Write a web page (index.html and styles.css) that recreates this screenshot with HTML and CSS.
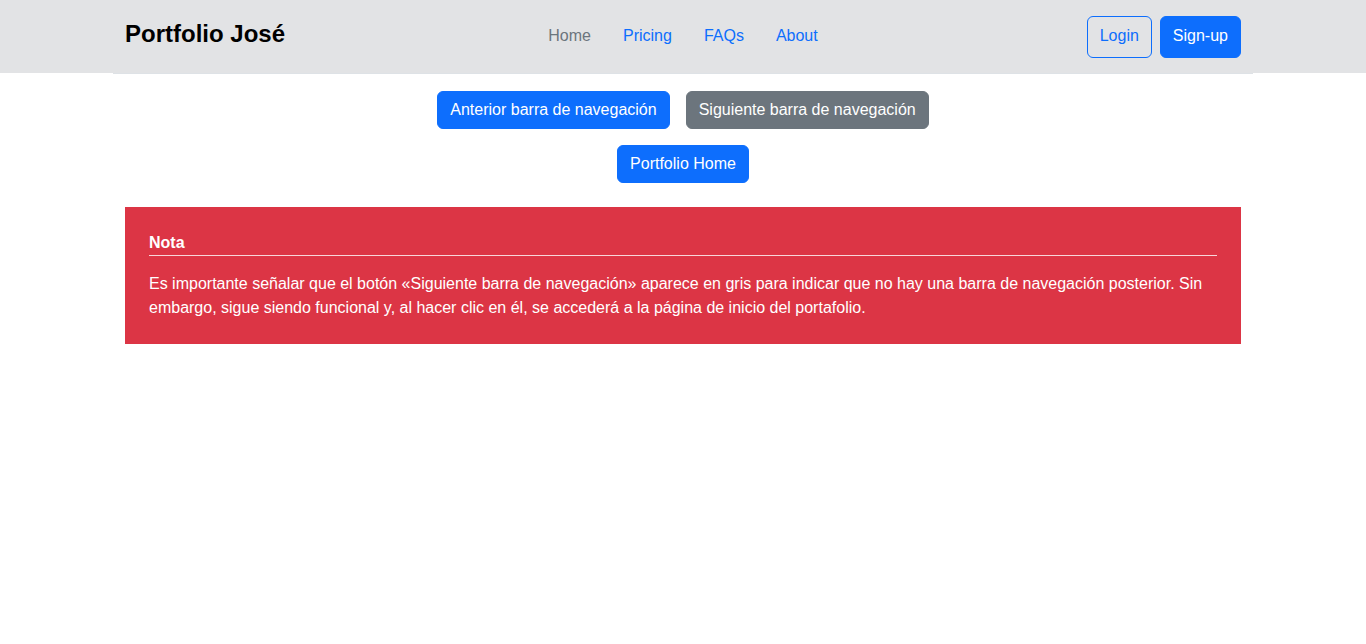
FILE: index.html
```html
<!DOCTYPE html>
<html lang="es">
<head>
<meta charset="utf-8">
<title>Portfolio José</title>
<link rel="stylesheet" href="styles.css">
</head>
<body>
<header class="topbar">
  <div class="container header-inner">
    <a class="brand" href="#">Portfolio José</a>
    <nav class="nav">
      <a class="nav-link muted" href="#">Home</a>
      <a class="nav-link" href="#">Pricing</a>
      <a class="nav-link" href="#">FAQs</a>
      <a class="nav-link" href="#">About</a>
    </nav>
    <div class="actions">
      <button class="btn btn-outline btn-tall">Login</button>
      <button class="btn btn-primary btn-tall">Sign-up</button>
    </div>
  </div>
</header>
<main class="container main">
  <div class="btn-row">
    <button class="btn btn-primary">Anterior barra de navegación</button>
    <button class="btn btn-secondary">Siguiente barra de navegación</button>
  </div>
  <div class="btn-row">
    <button class="btn btn-primary">Portfolio Home</button>
  </div>
  <section class="note">
    <h4 class="note-title">Nota</h4>
    <p class="note-text">Es importante señalar que el botón «Siguiente barra de navegación» aparece en gris para indicar que no hay una barra de navegación posterior. Sin embargo, sigue siendo funcional y, al hacer clic en él, se accederá a la página de inicio del portafolio.</p>
  </section>
</main>
</body>
</html>
```
FILE: styles.css
```css
* { box-sizing: border-box; }
html, body { margin: 0; padding: 0; }
body {
  font-family: "Liberation Sans", Arial, sans-serif;
  font-size: 16px;
  line-height: 24px;
  color: #212529;
  background: #fff;
}
.container {
  width: 1140px;
  margin: 0 auto;
  padding-left: 12px;
  padding-right: 12px;
}
.topbar {
  background: #e2e3e5;
  height: 73px;
}
.header-inner {
  display: grid;
  grid-template-columns: 1fr auto 1fr;
  align-items: start;
  height: 74px;
  padding-top: 16px;
  padding-bottom: 15px;
  border-bottom: 1px solid #dee2e6;
  background: #e2e3e5;
}
.brand {
  font-size: 24px;
  font-weight: 700;
  line-height: 36px;
  color: #000;
  text-decoration: none;
  justify-self: start;
}
.nav {
  display: flex;
}
.nav-link {
  padding: 8px 16px;
  color: #0d6efd;
  text-decoration: none;
  line-height: 24px;
}
.nav-link.muted { color: #6c757d; }
.actions {
  justify-self: end;
  display: flex;
  gap: 8px;
}
.btn {
  font-family: "Liberation Sans", Arial, sans-serif;
  font-size: 16px;
  line-height: 24px;
  padding: 6px 12px;
  border: 1px solid transparent;
  border-radius: 6px;
  cursor: pointer;
}
.btn-tall { padding: 7px 12px 9px; }
.btn-primary { background: #0d6efd; border-color: #0d6efd; color: #fff; }
.btn-secondary { background: #6c757d; border-color: #6c757d; color: #fff; }
.btn-outline { background: transparent; border-color: #0d6efd; color: #0d6efd; }
.main { padding-top: 18px; }
.btn-row {
  display: flex;
  justify-content: center;
  gap: 16px;
  margin-bottom: 16px;
}
.note {
  margin-top: 24px;
  background: #dc3545;
  color: #fff;
  padding: 24px;
}
.note-title {
  margin: 0 0 16px;
  font-size: 16px;
  font-weight: 700;
  line-height: 24px;
  border-bottom: 1px solid rgba(255,255,255,0.8);
}
.note-text {
  margin: 0;
  line-height: 24px;
}
```
